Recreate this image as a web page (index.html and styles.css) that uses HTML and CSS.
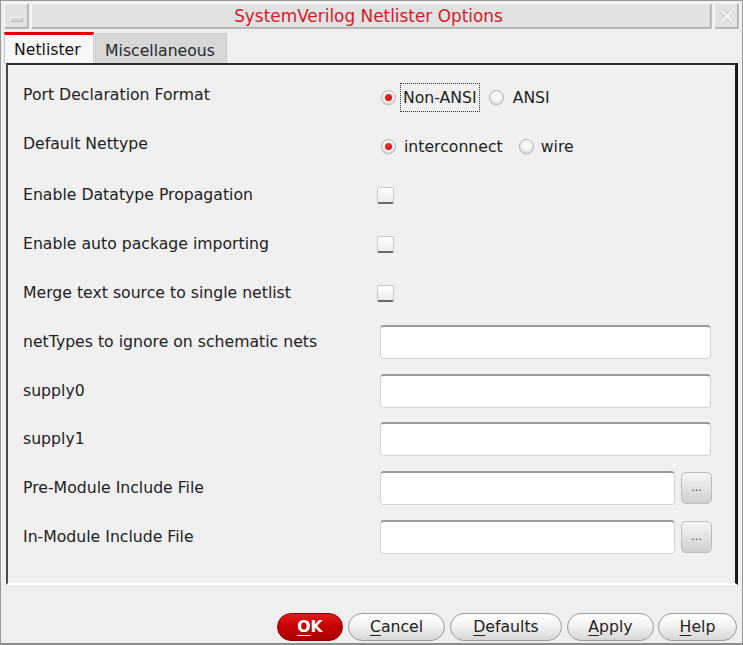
FILE: index.html
```html
<!DOCTYPE html>
<html>
<head>
<meta charset="utf-8">
<link rel="stylesheet" href="styles.css">
</head>
<body>
<div class="window">
  <div class="titlebar">
    <div class="tb-btn tb-min"><span class="dash"></span></div>
    <div class="tb-title">SystemVerilog Netlister Options</div>
    <div class="tb-btn tb-close">
      <svg width="18" height="18" viewBox="0 0 18 18"><path d="M4 4 L14 14 M14 4 L4 14" stroke="#c8c8c8" stroke-width="4.5" fill="none"/><path d="M4 4 L14 14 M14 4 L4 14" stroke="#f4f4f4" stroke-width="2.5" fill="none"/></svg>
    </div>
  </div>
  <div class="tabs">
    <div class="tab active">Netlister</div>
    <div class="tab">Miscellaneous</div>
  </div>
  <div class="panel">
    <div class="row">
      <div class="label">Port Declaration Format</div>
      <div class="ctrl radios r1">
        <span class="radio on"></span><span class="rtext focus">Non-ANSI</span>
        <span class="radio"></span><span class="rtext">ANSI</span>
      </div>
    </div>
    <div class="row">
      <div class="label">Default Nettype</div>
      <div class="ctrl radios r2">
        <span class="radio on"></span><span class="rtext">interconnect</span>
        <span class="radio"></span><span class="rtext">wire</span>
      </div>
    </div>
    <div class="row">
      <div class="label">Enable Datatype Propagation</div>
      <div class="ctrl"><span class="check"></span></div>
    </div>
    <div class="row">
      <div class="label">Enable auto package importing</div>
      <div class="ctrl"><span class="check"></span></div>
    </div>
    <div class="row">
      <div class="label">Merge text source to single netlist</div>
      <div class="ctrl"><span class="check"></span></div>
    </div>
    <div class="row">
      <div class="label">netTypes to ignore on schematic nets</div>
      <div class="ctrl"><span class="input full"></span></div>
    </div>
    <div class="row">
      <div class="label">supply0</div>
      <div class="ctrl"><span class="input full"></span></div>
    </div>
    <div class="row">
      <div class="label">supply1</div>
      <div class="ctrl"><span class="input full"></span></div>
    </div>
    <div class="row">
      <div class="label">Pre-Module Include File</div>
      <div class="ctrl"><span class="input short"></span><span class="browse">...</span></div>
    </div>
    <div class="row">
      <div class="label">In-Module Include File</div>
      <div class="ctrl"><span class="input short"></span><span class="browse">...</span></div>
    </div>
  </div>
  <div class="footer">
    <button class="btn ok"><u>O</u>K</button>
    <button class="btn cancel"><u>C</u>ancel</button>
    <button class="btn defaults"><u>D</u>efaults</button>
    <button class="btn apply"><u>A</u>pply</button>
    <button class="btn help"><u>H</u>elp</button>
  </div>
</div>
</body>
</html>
```
FILE: styles.css
```css
* { box-sizing: border-box; }
html, body { margin: 0; padding: 0; background: #f0f0f0; }
body {
  font-family: "DejaVu Sans", "Noto Sans", sans-serif;
  font-size: 15.7px;
  color: #1e1e1e;
}
.window {
  width: 743px;
  height: 645px;
  border: 1px solid #9a9a9a;
  border-bottom: 2px solid #8c8c8c;
  background: #efefef;
  padding: 2px 3px 0 3px;
  display: flex;
  flex-direction: column;
}
.titlebar {
  display: flex;
  height: 26px;
  gap: 2px;
}
.tb-btn {
  width: 25px;
  height: 26px;
  background: #e2e2e2;
  border: 1px solid #c2c2c2;
  border-top-color: #f8f8f8;
  border-left-color: #f8f8f8;
  box-shadow: inset -1px -1px 0 #b0b0b0;
  display: flex;
  align-items: center;
  justify-content: center;
}
.tb-min .dash {
  display: block;
  width: 13px;
  height: 5px;
  background: #d6d6d6;
  border: 1px solid #b8b8b8;
  border-top-color: #fafafa;
  border-left-color: #fafafa;
  margin-top: 6px;
}
.tb-title {
  flex: 1;
  background: #e2e2e2;
  border: 1px solid #c2c2c2;
  border-top-color: #f8f8f8;
  border-left-color: #f8f8f8;
  box-shadow: inset -1px -1px 0 #b0b0b0;
  color: #d21a2a;
  font-size: 16.9px;
  text-align: center;
  line-height: 24px;
  padding-right: 6px;
}
.tabs {
  display: flex;
  margin-top: 3px;
  height: 31px;
}
.tab {
  height: 31px;
  padding: 0 9px;
  line-height: 34px;
  border: 1px solid #c8c8c8;
  border-bottom: none;
}
.tab.active {
  width: 90px;
  background: #f7f7f7;
  border-top: 3px solid #d80000;
  line-height: 30px;
  color: #111;
}
.tab:not(.active) {
  width: 132px;
  background: #d7d7d7;
  margin-left: 1px;
  margin-top: 1px;
  height: 30px;
  color: #2a2a2a;
}
.panel {
  margin-left: 2px;
  margin-right: 1px;
  height: 522px;
  border-top: 2px solid #2a2a2a;
  border-left: 2px solid #4a4a4a;
  border-right: 3px solid #1a1a1a;
  border-bottom: 2px solid #ffffff;
  background: #f0f0f0;
  padding: 8px 0 0 15px;
  display: flex;
  flex-direction: column;
}
.row {
  display: flex;
  align-items: center;
  height: 48.8px;
}
.label {
  width: 348px;
  flex: none;
  color: #222;
}
.ctrl {
  display: flex;
  align-items: center;
}
.row:nth-child(1) .label, .row:nth-child(2) .label { margin-top: -6px; }
.radios { margin-left: 10px; }
.radio {
  width: 15px;
  height: 15px;
  border-radius: 50%;
  background: radial-gradient(circle at 50% 40%, #ffffff 0%, #f2f2f2 50%, #d4d4d4 100%);
  border: 1px solid #b4b4b4;
  box-shadow: 0 1px 0 #e0e0e0;
  position: relative;
  flex: none;
}
.radio.on::after {
  content: "";
  position: absolute;
  left: 3px; top: 3px;
  width: 7px; height: 7px;
  border-radius: 50%;
  background: radial-gradient(circle at 40% 35%, #ff3030, #c00000);
}
.rtext {
  padding: 3px 0;
  border: 1px dotted transparent;
}
.r1 .rtext.focus {
  border: 1px dotted #333;
  margin-left: 4px;
  margin-right: 9px;
  padding: 4px 2px;
}
.r1 .rtext:last-child { margin-left: 8px; }
.r2 .rtext { margin-left: 7px; margin-right: 15px; }
.r2 .rtext:last-child { margin-left: 6px; }
.check {
  display: block;
  width: 17px;
  height: 17px;
  margin-left: 6px;
  margin-top: 1px;
  border: 1px solid #c8c8c8;
  border-bottom: 2px solid #6a6a6a;
  border-radius: 2px;
  background: linear-gradient(#ffffff, #ececec);
}
.input {
  display: block;
  height: 34px;
  margin-left: 9px;
  margin-top: 1px;
  background: #ffffff;
  border: 1px solid #d4d4d4;
  border-top: 2px solid #9a9a9a;
  border-radius: 4px;
}
.input.full { width: 331px; }
.input.short { width: 295px; }
.browse {
  display: flex;
  align-items: center;
  justify-content: center;
  width: 31px;
  height: 32px;
  margin-left: 6px;
  margin-top: 1px;
  border: 1px solid #bcbcbc;
  border-radius: 5px;
  background: linear-gradient(#f6f6f6, #cfcfcf);
  font-size: 11px;
  color: #333;
  padding-bottom: 2px;
}
.footer {
  flex: 1;
  display: flex;
  justify-content: flex-end;
  align-items: flex-end;
  gap: 5px;
  padding: 0 2px 2px 0;
}
.btn {
  height: 28px;
  border-radius: 14px;
  font-family: "DejaVu Sans", "Noto Sans", sans-serif;
  font-size: 15.7px;
  border: 1px solid #9c9c9c;
  background: linear-gradient(#ffffff 0%, #f3f3f3 45%, #d6d6d6 100%);
  color: #222;
  padding: 0;
  line-height: 26px;
}
.btn u { text-underline-offset: 3px; }
.ok {
  width: 66px;
  background: linear-gradient(#e21b1b 0%, #c40000 50%, #a80000 100%);
  border-color: #8a0000;
  color: #ffffff;
  font-weight: bold;
}
.cancel { width: 97px; }
.defaults { width: 112px; }
.apply { width: 87px; }
.help { width: 79px; margin-left: -1px; }
```
